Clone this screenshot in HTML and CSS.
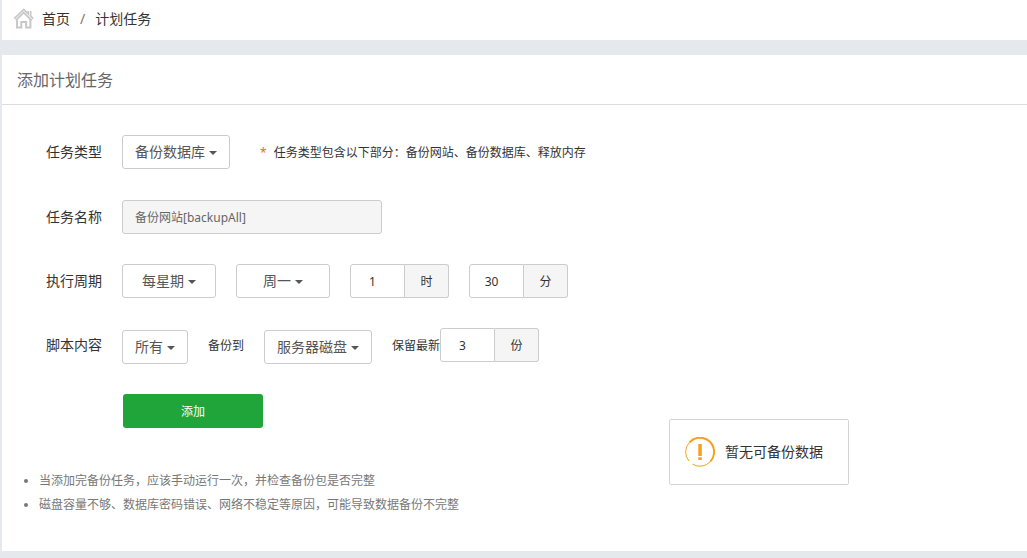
FILE: index.html
```html
<!DOCTYPE html>
<html lang="zh-CN">
<head>
<meta charset="utf-8">
<title>计划任务</title>
<link rel="stylesheet" href="styles.css">
</head>
<body>
<nav class="crumbs" aria-label="位置">
  <svg class="home" viewBox="0 0 22 22" width="22" height="22" aria-hidden="true">
    <path class="home-line" d="M4 11v8.500h4.300v-5.500h4.800v5.500h4.300v-8.500" />
    <path class="home-edge" d="M2 11.500 10.700 3 19.400 11.500M16.500 7.500V3" />
    <path class="home-core" d="M2 11.500 10.700 3 19.400 11.500M16.500 7.500V3" />
  </svg>
  <a href="#">首页</a>
  <span class="slash">/</span>
  <a href="#">计划任务</a>
</nav>

<main class="panel">
  <h1 class="panel-title">添加计划任务</h1>
  <form class="form">
    <div class="row">
      <label class="label" for="type">任务类型</label>
      <select class="select" id="type"><option>备份数据库</option></select>
      <p class="hint"><span class="star">*</span>任务类型包含以下部分：备份网站、备份数据库、释放内存</p>
    </div>
    <div class="row">
      <label class="label" for="name">任务名称</label>
      <input class="text" id="name" type="text" value="备份网站[backupAll]" readonly>
    </div>
    <div class="row">
      <label class="label" for="cycle">执行周期</label>
      <select class="select select-mid" id="cycle"><option>每星期</option></select>
      <select class="select select-wide" aria-label="星期"><option>周一</option></select>
      <div class="group">
        <input class="num" id="hour" type="text" value="1">
        <label class="unit" for="hour">时</label>
      </div>
      <div class="group">
        <input class="num" id="minute" type="text" value="30">
        <label class="unit" for="minute">分</label>
      </div>
    </div>
    <div class="row row-script">
      <label class="label" for="content">脚本内容</label>
      <select class="select" id="content"><option>所有</option></select>
      <label class="small" for="target">备份到</label>
      <select class="select" id="target"><option>服务器磁盘</option></select>
      <div class="keep">
        <label class="small" for="count">保留最新</label>
        <div class="group">
          <input class="num" id="count" type="text" value="3">
          <label class="unit" for="count">份</label>
        </div>
      </div>
    </div>
    <button class="submit" type="button">添加</button>
  </form>
  <ul class="notes">
    <li>当添加完备份任务，应该手动运行一次，并检查备份包是否完整</li>
    <li>磁盘容量不够、数据库密码错误、网络不稳定等原因，可能导致数据备份不完整</li>
  </ul>
</main>

<div class="toast" role="alert">
  <svg viewBox="0 0 30 30" width="30" height="30" aria-hidden="true">
    <path class="ring-thick" d="M4.600 5.200A14 14 0 0 1 25.300 24.500" />
    <path class="ring" d="M25.300 24.500A14 14 0 0 1 7.500 27.200M3.900 24A14 14 0 0 1 4.600 5.200" />
    <path class="mark" d="M13.300 7h3.500v12h-3.500zM13.300 20.300h3.500v2.700h-3.500z" />
  </svg>
  <span>暂无可备份数据</span>
</div>
</body>
</html>
```
FILE: styles.css
```css
* {
  box-sizing: border-box;
}

body {
  margin: 0;
  padding-left: 2px;
  min-height: 100vh;
  background: #e5e9ed;
  color: #333;
  font: 12px/24px "Noto Sans", "Noto Sans CJK SC", sans-serif;
}

.crumbs {
  display: flex;
  align-items: center;
  height: 40px;
  padding: 0 11px 2px;
  background: #fff;
  font-size: 14px;
}

.crumbs a {
  color: #333;
  text-decoration: none;
}

.home {
  margin-right: 7px;
  fill: none;
}

.home-line {
  stroke: #c8c8c8;
  stroke-width: 2;
}

.home-edge {
  stroke: #c8c8c8;
  stroke-width: 4;
}

.home-core {
  stroke: #f4f4f4;
  stroke-width: 1;
}

.slash {
  margin: 0 10px;
  color: #777;
}

.panel {
  margin-top: 15px;
  padding-bottom: 34px;
  background: #fff;
}

.panel-title {
  margin: 0;
  padding: 2px 15px 0;
  border-bottom: 1px solid #ddd;
  color: #666;
  font-size: 16px;
  font-weight: 400;
  line-height: 47px;
}

.form {
  display: flex;
  flex-direction: column;
  gap: 30px;
  padding: 30px 20px 0 44px;
}

.row {
  display: flex;
  align-items: flex-start;
  gap: 20px;
}

.label {
  width: 56px;
  font-size: 14px;
  line-height: 34px;
}

.select,
.text,
.num {
  height: 34px;
  margin: 0;
  border: 1px solid #ccc;
  border-radius: 3px;
  background-color: #fff;
  color: #555;
  font-family: inherit;
}

.select {
  appearance: none;
  padding: 0 24px 2px 12px;
  background-image: url("data:image/svg+xml,%3Csvg xmlns='http://www.w3.org/2000/svg' width='8' height='4'%3E%3Cpath d='M0 0h8L4 4z' fill='%23555'/%3E%3C/svg%3E");
  background-repeat: no-repeat;
  background-position: right 12px top 15px;
  font-size: 14px;
}

.select-mid {
  padding: 0 31px 2px 19px;
  background-position: right 19px top 15px;
}

.select-wide {
  padding: 0 38px 2px 26px;
  background-position: right 26px top 15px;
}

.hint {
  margin: 0 0 0 10px;
  line-height: 35px;
}

.star {
  margin-right: 7px;
  color: #f60;
}

.text {
  width: 260px;
  padding: 0 12px;
  background-color: #f5f5f5;
  color: #666;
  font-size: 12px;
}

.group {
  display: flex;
}

.num {
  width: 55px;
  padding: 0 10px 0 0;
  border-radius: 3px 0 0 3px;
  color: #333;
  font-size: 12px;
  text-align: center;
}

.unit {
  width: 44px;
  height: 34px;
  border: 1px solid #ccc;
  border-left: 0;
  border-radius: 0 3px 3px 0;
  background: #f5f5f5;
  line-height: 34px;
  text-align: center;
}

.row-script .select {
  margin-top: 2px;
}

.small {
  line-height: 36px;
}

.keep {
  display: flex;
}

.submit {
  width: 140px;
  height: 34px;
  margin-left: 77px;
  padding: 2px 0 0;
  border: 0;
  border-radius: 3px;
  background: #20a53a;
  color: #fff;
  font: inherit;
}

.notes {
  margin: 41px 0 0;
  padding: 0 20px 0 37px;
  color: #777;
}

.toast {
  position: absolute;
  left: 669px;
  top: 419px;
  display: flex;
  align-items: center;
  gap: 10px;
  height: 66px;
  padding: 0 25px 0 15px;
  border: 1px solid #d3d4d3;
  border-radius: 2px;
  background: #fff;
  font-size: 14px;
}

.ring-thick,
.ring {
  fill: none;
  stroke: #f8a01c;
}

.ring {
  stroke-width: 1;
}

.ring-thick {
  stroke-width: 2;
}

.mark {
  fill: #f8a01c;
}
```
